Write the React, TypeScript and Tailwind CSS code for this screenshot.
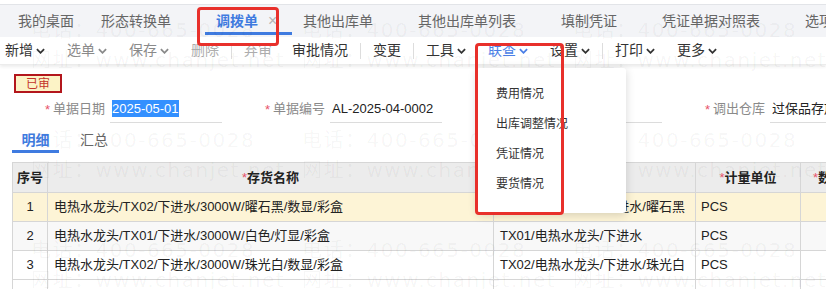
import React from 'react';

const Chevron = ({ className = '' }: { className?: string }) => (
  <svg viewBox="0 0 10 6" className={`w-[9px] h-[6px] ${className}`} fill="none" stroke="currentColor" strokeWidth="2">
    <path d="M1 1l4 4 4-4" />
  </svg>
);

const TabSep = () => <div className="w-px h-[16px] bg-[#dadce0] self-center" />;
const ToolSep = () => <div className="w-px h-[16px] bg-[#dddddd] mx-px" />;

const Tab = ({ label, active = false }: { label: string; active?: boolean }) => (
  <div className="relative flex items-center pl-[11px]">
    <span className={active ? 'font-bold text-[#3f7be0]' : ''}>{label}</span>
    <span className="w-[34px] pl-[10px] text-[#b5b5b5] text-[16px]">{active ? '×' : ''}</span>
    {active && <span className="absolute left-0 right-0 bottom-[2px] h-[3px] bg-[#3f7be0]" />}
  </div>
);

const ToolItem = ({ label, color = 'text-[#333]', menu = false, className = '' }: { label: string; color?: string; menu?: boolean; className?: string }) => (
  <div className={`flex items-center gap-[3px] px-[11px] ${color} ${className}`}>
    <span>{label}</span>
    {menu && <Chevron />}
  </div>
);

const Field = ({ label, value, selected = false }: { label: string; value: string; selected?: boolean }) => (
  <div className="w-[220px] flex items-start shrink-0">
    <span className="w-[8px] mt-[2px] leading-[17px] text-[#e8536b]">*</span>
    <span className="w-[52px] mt-[1px] leading-[17px] text-[#8a8a8a]">{label}</span>
    <div className="ml-[5px] w-[112px] h-[24px] border-b border-[#dcdcdc] pl-[2px] whitespace-nowrap overflow-visible">
      <span className={`inline-block mt-[1px] leading-[17px] ${selected ? 'bg-[#3390ff] text-white' : 'text-[#222]'}`}>{value}</span>
    </div>
  </div>
);

const rows = [
  { no: 1, name: '电热水龙头/TX02/下进水/3000W/曜石黑/数显/彩盒', spec: 'TX02/电热水龙头/下进水/曜石黑', bg: 'bg-[#fdf4d6]' },
  { no: 2, name: '电热水龙头/TX01/下进水/3000W/白色/灯显/彩盒', spec: 'TX01/电热水龙头/下进水', bg: 'bg-[#f8f8f8]' },
  { no: 3, name: '电热水龙头/TX02/下进水/3000W/珠光白/数显/彩盒', spec: 'TX02/电热水龙头/下进水/珠光白', bg: 'bg-white' },
  { no: 4, name: '', spec: '', bg: 'bg-white' },
];

const cols = 'grid grid-cols-[35px_446px_202px_105px_120px]';
const cell = 'border-r border-b border-[#d6d6d6] flex items-center overflow-hidden whitespace-nowrap';

export default function App() {
  return (
    <div className="relative w-[826px] h-[289px] overflow-hidden bg-white font-['Liberation_Sans','Noto_Sans_CJK_SC',sans-serif]">
      {/* tab bar */}
      <div className="pt-[4px]">
        <div className="h-[33px] border-t border-[#e2e4e8] bg-[#f3f4f7] flex items-stretch text-[14px] text-[#666] whitespace-nowrap">
          <div className="flex items-center pl-[18px] pr-[16px]">我的桌面</div>
          <TabSep />
          <Tab label="形态转换单" />
          <Tab label="调拨单" active />
          <TabSep />
          <Tab label="其他出库单" />
          <TabSep />
          <Tab label="其他出库单列表" />
          <TabSep />
          <Tab label="填制凭证" />
          <TabSep />
          <Tab label="凭证单据对照表" />
          <TabSep />
          <Tab label="选项" />
        </div>
      </div>

      {/* toolbar */}
      <div className="h-[28px] flex items-center text-[14px] border-b border-[#ececec] shadow-[0_2px_3px_rgba(0,0,0,0.07)] whitespace-nowrap">
        <div className="flex items-center ml-[-6px]">
          <ToolItem label="新增" menu />
          <ToolItem label="选单" menu color="text-[#8a8a8a]" />
          <ToolItem label="保存" menu color="text-[#8a8a8a]" />
          <ToolItem label="删除" color="text-[#adadad]" />
          <ToolSep />
          <ToolItem label="弃审" color="text-[#adadad]" />
          <ToolItem label="审批情况" className="ml-[-2px]" />
          <ToolSep />
          <ToolItem label="变更" />
          <ToolSep />
          <ToolItem label="工具" menu />
          <ToolItem label="联查" menu color="text-[#4b7fe6]" />
          <ToolItem label="设置" menu />
          <ToolSep />
          <ToolItem label="打印" menu />
          <ToolItem label="更多" menu />
        </div>
      </div>

      {/* status */}
      <div className="ml-[14px] mt-[9px] w-[48px] h-[19px] border-2 border-[#b3161c] bg-[#fcf3c6] flex items-center justify-center text-[12px] text-[#c4352c]">
        已审
      </div>

      {/* header fields */}
      <div className="mt-[6px] pl-[45px] flex text-[13px]">
        <Field label="单据日期" value="2025-05-01" selected />
        <Field label="单据编号" value="AL-2025-04-0002" />
        <Field label="调拨类型" value="普通调拨" />
        <Field label="调出仓库" value="过保品存放仓库" />
      </div>

      {/* detail tabs */}
      <div className="mt-[8px] ml-[12px] flex text-[14px]">
        <div className="w-[47px] flex flex-col items-center">
          <span className="leading-[18px] font-bold text-[#3f7be0]">明细</span>
          <span className="mt-[1px] w-full h-[3px] bg-[#3f7be0]" />
        </div>
        <div className="ml-[21px] leading-[18px] text-[#666]">汇总</div>
      </div>

      {/* table */}
      <div className="mt-[9px] ml-[12px] w-[900px] border-t border-l border-[#d6d6d6] text-[13px] text-[#222]">
        <div className={`${cols} h-[30px] bg-[#ececec] font-bold`}>
          <div className={`${cell} justify-center`}>序号</div>
          <div className={`${cell} justify-center`}><span className="text-[#e8536b] font-normal">*</span>存货名称</div>
          <div className={`${cell} justify-center`}>规格型号</div>
          <div className={`${cell} justify-center`}><span className="text-[#e8536b] font-normal">*</span>计量单位</div>
          <div className={`${cell} pl-[12px]`}><span className="text-[#e8536b] font-normal">*</span>数量</div>
        </div>
        {rows.map((r) => (
          <div key={r.no} className={`${cols} h-[29px] ${r.bg}`}>
            <div className={`${cell} justify-center`}>{r.name ? r.no : ''}</div>
            <div className={`${cell} pl-[6px]`}>{r.name}</div>
            <div className={`${cell} pl-[6px]`}>{r.spec}</div>
            <div className={`${cell} pl-[5px]`}>{r.name ? 'PCS' : ''}</div>
            <div className={cell}></div>
          </div>
        ))}
      </div>

      {/* watermark */}
      <div className="absolute left-[31px] top-[15px] pointer-events-none flex flex-col gap-[50px] text-[20px] tracking-[1.5px] text-black/[0.045] font-['DejaVu_Sans','Noto_Sans_CJK_SC',sans-serif] whitespace-nowrap">
        {[0, 1, 2].map((g) => (
          <div key={g} className="grid grid-cols-[271px_271px_271px] leading-[30px]">
            <span>电话：400-665-0028</span>
            <span>电话：400-665-0028</span>
            <span>电话：400-665-0028</span>
            <span>网址：www.chanjet.net</span>
            <span>网址：www.chanjet.net</span>
            <span>网址：www.chanjet.net</span>
          </div>
        ))}
      </div>

      {/* 联查 dropdown */}
      <div className="absolute left-[477px] top-[68px] w-[149px] h-[145px] bg-white rounded-[3px] shadow-[0_2px_10px_rgba(0,0,0,0.16)] pt-[11px] text-[12px] text-[#333]">
        {['费用情况', '出库调整情况', '凭证情况', '要货情况'].map((t) => (
          <div key={t} className="h-[30px] flex items-center pl-[19px]">{t}</div>
        ))}
      </div>

      {/* annotation boxes */}
      <div className="absolute left-[197px] top-[7px] w-[82px] h-[39px] border-[3px] border-[#e8302b] rounded-[4px] pointer-events-none" />
      <div className="absolute left-[475px] top-[43px] w-[89px] h-[172px] border-[3px] border-[#e8302b] rounded-[4px] pointer-events-none" />
    </div>
  );
}
